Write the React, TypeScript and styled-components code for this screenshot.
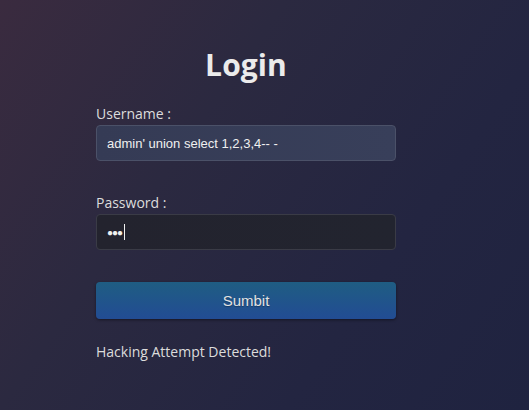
import React from 'react';
import styled, { createGlobalStyle } from 'styled-components';

const GlobalStyle = createGlobalStyle`
  html, body {
    margin: 0;
    padding: 0;
    height: 100%;
  }
  body {
    background: linear-gradient(125deg, #3a2b3f 0%, #2b2940 35%, #232541 70%, #1f2340 100%);
    font-family: "Open Sans", "DejaVu Sans", sans-serif;
    color: #e6e6e6;
    overflow: hidden;
  }
`;

const Page = styled.div`
  width: 529px;
  height: 410px;
  padding: 46px 0 0 96px;
  box-sizing: border-box;
`;

const Form = styled.form`
  width: 300px;
  display: flex;
  flex-direction: column;
`;

const Title = styled.h1`
  margin: 0 0 20px;
  text-align: center;
  font-size: 30px;
  font-weight: 700;
  line-height: 38px;
  letter-spacing: 0.1px;
  color: #ebebeb;
`;

const Label = styled.label`
  font-size: 14px;
  line-height: 19px;
  color: #dcdcdc;
  margin-bottom: 2px;
`;

const Field = styled.div<{ $dark?: boolean }>`
  height: 36px;
  box-sizing: border-box;
  display: flex;
  align-items: center;
  padding: 0 10px;
  border-radius: 4px;
  border: 1px solid ${p => (p.$dark ? '#3a3b46' : '#4b5168')};
  background: ${p =>
    p.$dark
      ? 'linear-gradient(90deg, #23232e, #22242f)'
      : 'linear-gradient(90deg, #353b55, #383f5a)'};
  font-family: "Liberation Sans", Arial, sans-serif;
  font-size: 13px;
  color: #f0f0f0;
  margin-bottom: 32px;
`;

const Dots = styled.span`
  font-size: 10px;
  letter-spacing: -1px;
  color: #f0f0f0;
`;

const Caret = styled.span`
  display: inline-block;
  width: 1px;
  height: 16px;
  margin-left: 2px;
  background: #f0f0f0;
`;

const SubmitButton = styled.button`
  height: 37px;
  border: none;
  border-radius: 4px;
  background: linear-gradient(180deg, #1f5d82 0%, #224c94 100%);
  box-shadow: 0 1px 3px rgba(0, 0, 0, 0.45);
  font-family: "Liberation Sans", Arial, sans-serif;
  font-size: 15px;
  color: #e2e2e2;
  text-shadow: 0 1px 1px rgba(0, 0, 0, 0.3);
  cursor: pointer;
  margin-bottom: 23px;
`;

const Message = styled.p`
  margin: 0;
  font-size: 14px;
  line-height: 19px;
  color: #dcdcdc;
`;

const App: React.FC = () => {
  return (
    <>
      <GlobalStyle />
      <Page>
        <Form onSubmit={e => e.preventDefault()}>
          <Title>Login</Title>
          <Label>Username :</Label>
          <Field>admin' union select 1,2,3,4-- -</Field>
          <Label>Password :</Label>
          <Field $dark>
            <Dots>●●●</Dots>
            <Caret />
          </Field>
          <SubmitButton type="submit">Sumbit</SubmitButton>
          <Message>Hacking Attempt Detected!</Message>
        </Form>
      </Page>
    </>
  );
};

export default App;
